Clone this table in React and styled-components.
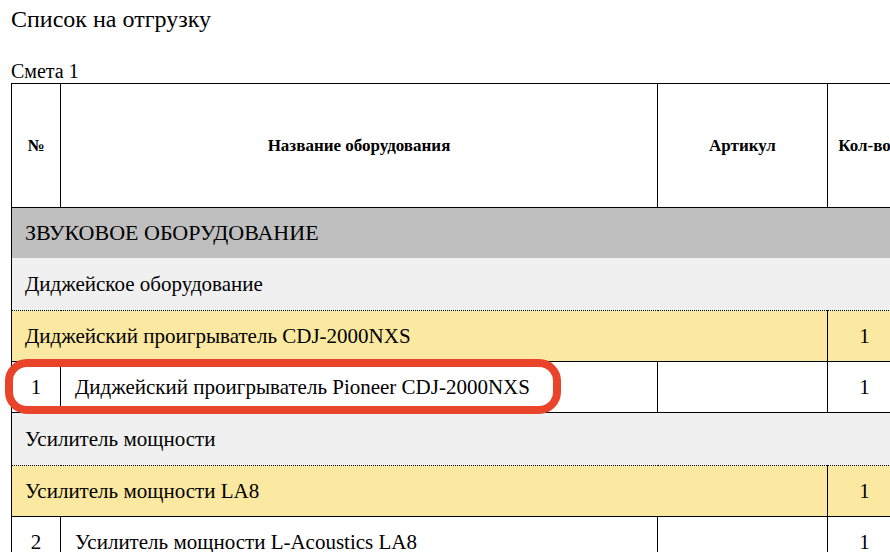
import React from 'react';
import styled, { createGlobalStyle } from 'styled-components';

const GlobalStyle = createGlobalStyle`
  html, body {
    margin: 0;
    padding: 0;
    background: #ffffff;
    overflow: hidden;
  }
  body {
    font-family: "Liberation Serif", "Times New Roman", serif;
    color: #000;
  }
`;

const Page = styled.div`
  position: relative;
  width: 890px;
  height: 552px;
  padding: 5px 0 0 11px;
  box-sizing: border-box;
  overflow: hidden;
`;

const Title = styled.h1`
  margin: 0;
  font-size: 24px;
  font-weight: normal;
  line-height: 28px;
`;

const Estimate = styled.div`
  margin-top: 28px;
  font-size: 20px;
  line-height: 20px;
`;

const Table = styled.table`
  border-collapse: collapse;
  table-layout: fixed;
  width: 890px;
  margin-top: 2px;
`;

const Col = styled.col`
  width: ${(p) => p.$w}px;
`;

const HeadCell = styled.th`
  border: 1px solid #000;
  height: 123px;
  padding: 0;
  font-size: 17px;
  font-weight: bold;
  text-align: center;
  vertical-align: middle;
  white-space: nowrap;
`;

const GroupCell = styled.td`
  height: ${(p) => p.$h || 50}px;
  padding: 0 0 0 13px;
  font-size: ${(p) => (p.$caps ? 22 : 21)}px;
  background: ${(p) => p.$bg};
  border-left: 1px solid #000;
  border-bottom: ${(p) => (p.$dotted ? '1px dotted #000' : 'none')};
  white-space: nowrap;
`;

const ItemRow = styled.tr`
  background: ${(p) => p.$bg || '#fff'};
  border-top: ${(p) => (p.$dotted ? '1px dotted #000' : '1px solid #000')};
  border-bottom: 1px solid #000;
`;

const Cell = styled.td`
  height: ${(p) => p.$h || 50}px;
  padding: 0 0 0 ${(p) => p.$pl || 0}px;
  font-size: 21px;
  border-left: 1px solid #000;
  border-right: 1px solid #000;
  text-align: ${(p) => p.$align || 'left'};
  white-space: nowrap;
`;

const Highlight = styled.div`
  position: absolute;
  left: 5px;
  top: 359px;
  width: 556px;
  height: 55px;
  border: 8px solid #e9432a;
  border-radius: 22px;
  box-sizing: border-box;
  pointer-events: none;
`;

const sections = [
  {
    title: 'ЗВУКОВОЕ ОБОРУДОВАНИЕ',
    groups: [
      {
        sub: 'Диджейское оборудование',
        name: 'Диджейский проигрыватель CDJ-2000NXS',
        qty: 1,
        items: [{ n: 1, name: 'Диджейский проигрыватель Pioneer CDJ-2000NXS', qty: 1 }],
      },
      {
        sub: 'Усилитель мощности',
        name: 'Усилитель мощности LA8',
        qty: 1,
        items: [{ n: 2, name: 'Усилитель мощности L-Acoustics LA8', qty: 1 }],
      },
    ],
  },
];

export default function App() {
  return (
    <>
      <GlobalStyle />
      <Page>
        <Title>Список на отгрузку</Title>
        <Estimate>Смета 1</Estimate>
        <Table>
          <colgroup>
            <Col $w={49} />
            <Col $w={597} />
            <Col $w={170} />
            <Col $w={74} />
          </colgroup>
          <thead>
            <tr>
              <HeadCell>№</HeadCell>
              <HeadCell>Название оборудования</HeadCell>
              <HeadCell>Артикул</HeadCell>
              <HeadCell>Кол-во</HeadCell>
            </tr>
          </thead>
          <tbody>
            {sections.map((s) => (
              <React.Fragment key={s.title}>
                <tr>
                  <GroupCell colSpan={4} $bg="#bfbfbf" $h={50} $caps>
                    {s.title}
                  </GroupCell>
                </tr>
                {s.groups.map((g) => (
                  <React.Fragment key={g.sub}>
                    <tr>
                      <GroupCell colSpan={4} $bg="#f0f0f0" $h={52} $dotted>
                        {g.sub}
                      </GroupCell>
                    </tr>
                    <ItemRow $bg="#fbe8a1" $dotted>
                      <Cell colSpan={3} $pl={13}>
                        {g.name}
                      </Cell>
                      <Cell $align="center">{g.qty}</Cell>
                    </ItemRow>
                    {g.items.map((it) => (
                      <ItemRow key={it.n}>
                        <Cell $align="center">{it.n}</Cell>
                        <Cell $pl={14}>{it.name}</Cell>
                        <Cell />
                        <Cell $align="center">{it.qty}</Cell>
                      </ItemRow>
                    ))}
                  </React.Fragment>
                ))}
              </React.Fragment>
            ))}
          </tbody>
        </Table>
        <Highlight />
      </Page>
    </>
  );
}
